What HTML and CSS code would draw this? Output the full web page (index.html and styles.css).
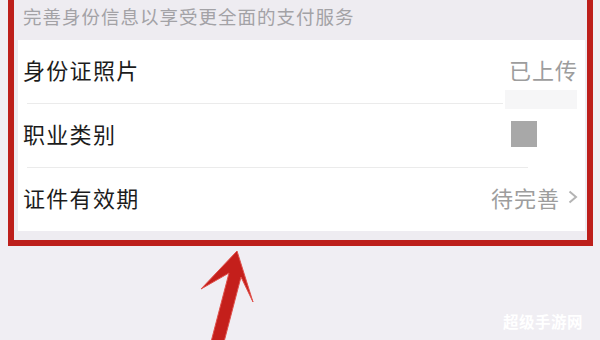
FILE: index.html
```html
<!DOCTYPE html>
<html lang="zh-CN">
<head>
<meta charset="utf-8">
<title>完善身份信息</title>
<link rel="stylesheet" href="styles.css">
</head>
<body>
<div class="frame">
  <div class="tip">完善身份信息以享受更全面的支付服务</div>
  <div class="list">
    <div class="row">
      <span class="label">身份证照片</span>
      <span class="value">已上传</span>
    </div>
    <div class="sep sep-a"></div>
    <div class="row">
      <span class="label">职业类别</span>
      <span class="box"></span>
    </div>
    <div class="sep sep-b"></div>
    <div class="row">
      <span class="label">证件有效期</span>
      <span class="value">待完善<svg class="chev" width="10" height="14" viewBox="0 0 10 14"><polyline points="1.5,1.5 8,7 1.5,12.5" fill="none" stroke="#b4b4b4" stroke-width="2"/></svg></span>
    </div>
    <div class="smudge"></div>
  </div>
</div>
<svg class="arrow" width="600" height="340" viewBox="0 0 600 340">
  <polygon points="237,251 253,302 241,277 224,342 211,342 229,273 201,289" fill="#c41f1b" stroke="#e0504a" stroke-width="1" stroke-linejoin="round"/>
</svg>
<div class="mark">超级手游网</div>
</body>
</html>
```
FILE: styles.css
```css
html, body {
  margin: 0;
  padding: 0;
}
body {
  width: 600px;
  height: 340px;
  overflow: hidden;
  background: #f0eef3;
  font-family: "Noto Sans CJK SC", "Noto Sans", sans-serif;
  position: relative;
}
.frame {
  margin: 0 7px 0 8px;
  border-style: solid;
  border-color: #bd1f1b;
  border-width: 0 6px 6px 6px;
  background: #eeecf1;
  padding: 0 2px 9px 4px;
}
.tip {
  height: 40px;
  padding-left: 5px;
  font-size: 18.5px;
  line-height: 32px;
  color: #a3a2a6;
  letter-spacing: 1px;
}
.list {
  background: #ffffff;
  position: relative;
}
.row {
  height: 63px;
  display: flex;
  align-items: center;
  justify-content: space-between;
  padding: 0 7px 6px 5px;
  box-sizing: border-box;
}
.label {
  font-size: 22px;
  color: #1c1c1c;
  letter-spacing: 1.3px;
}
.value {
  font-size: 22px;
  color: #9d9d9d;
  letter-spacing: 1px;
  display: flex;
  align-items: center;
}
.chev {
  margin-left: 8px;
}
.box {
  width: 26px;
  height: 26px;
  background: #a8a8a8;
  margin-right: 41px;
  position: relative;
  top: 1px;
}
.sep {
  height: 1px;
  background: #ebebeb;
  margin-left: 9px;
}
.sep-a {
  margin-right: 82px;
}
.sep-b {
  margin-right: 57px;
}
.smudge {
  position: absolute;
  left: 487px;
  top: 50px;
  width: 72px;
  height: 19px;
  background: #f6f6f7;
}
.arrow {
  position: absolute;
  left: 0;
  top: 0;
}
.mark {
  position: absolute;
  left: 503px;
  top: 310px;
  font-size: 15.5px;
  font-weight: 700;
  color: #ffffff;
  letter-spacing: 0.5px;
}
```
